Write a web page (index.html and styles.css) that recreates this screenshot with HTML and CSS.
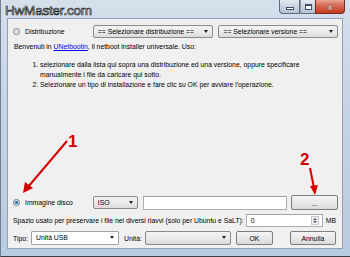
FILE: index.html
```html
<!DOCTYPE html>
<html lang="it">
<head>
    <meta charset="UTF-8">
    <title>UNetbootin</title>
    <link rel="stylesheet" href="styles.css">
</head>
<body>
    <div class="window">
        <div class="titlebar">
            <span class="watermark">HwMaster.com</span>
            <div class="caption-buttons">
                <span class="cap-btn cap-min"><i></i></span>
                <span class="cap-btn cap-max"><i></i></span>
                <span class="cap-btn cap-close">x</span>
            </div>
        </div>

        <div class="client">
            <div class="row row-distro">
                <span class="radio"></span>
                <span class="label">Distribuzione</span>
                <span class="select sel-distro">== Selezionare distribuzione ==</span>
                <span class="select sel-version">== Selezionare versione ==</span>
            </div>

            <p class="welcome">Benvenuti in <a href="#">UNetbootin</a>, il netboot installer universale. Uso:</p>

            <ol class="steps">
                <li>selezionare dalla lista qui sopra una distribuzione ed una versione, oppure specificare<br>manualmente i file da caricare qui sotto.</li>
                <li>Selezionare un tipo di installazione e fare clic su OK per avviare l'operazione.</li>
            </ol>

            <div class="bottom">
                <div class="row row-image">
                    <span class="radio checked"></span>
                    <span class="label">Immagine disco</span>
                    <span class="select sel-iso">ISO</span>
                    <span class="textbox path"></span>
                    <span class="button browse">...</span>
                </div>

                <div class="row row-space">
                    <span class="label">Spazio usato per preservare i file nei diversi riavvi (solo per Ubuntu e SaLT):</span>
                    <span class="textbox spin">0<span class="spin-arrows"><i class="up"></i><i class="down"></i></span></span>
                    <span class="label">MB</span>
                </div>

                <div class="row row-type">
                    <span class="label">Tipo:</span>
                    <span class="select sel-type white">Unità USB</span>
                    <span class="label">Unità:</span>
                    <span class="select sel-drive"></span>
                    <span class="button ok">OK</span>
                    <span class="button cancel">Annulla</span>
                </div>
            </div>

            <!-- annotation arrows drawn over the dialog -->
            <svg class="notes" width="350" height="257" viewBox="0 0 350 257">
                <line x1="66" y1="141" x2="27" y2="187" stroke="#d20000" stroke-width="2"/>
                <polygon points="22,193 24,182 32,188" fill="#d20000"/>
                <text x="67" y="147" class="note-num">1</text>
                <line x1="309" y1="168" x2="313" y2="188" stroke="#d20000" stroke-width="2"/>
                <polygon points="314,195 309,186 317,185" fill="#d20000"/>
                <text x="299" y="165" class="note-num">2</text>
            </svg>
        </div>
    </div>
</body>
</html>
```

FILE: styles.css
```css
*{
    box-sizing: border-box;
}

body{
    margin: 0;
    width: 350px;
    height: 257px;
    overflow: hidden;
    font-family: "Liberation Sans", Arial, sans-serif;
    font-size: 6.85px;
    color: #000;
}

.window {
    position: relative;
    width: 350px;
    height: 257px;
    display: flex;
    flex-direction: column;
    padding: 0 7px 7px 6px;
    background: linear-gradient(to bottom, #d6e0ec 0%, #c6d4e5 40%, #b9cbe0 100%);
    border-left: 1px solid #6f7f92;
    border-bottom: 1px solid #3a3f46;
}

.titlebar {
    height: 18px;
    flex: none;
    display: flex;
    justify-content: flex-end;
    align-items: flex-start;
}

.watermark {
    position: absolute;
    left: 4px;
    top: 4px;
    font-size: 13.5px;
    line-height: 14px;
    letter-spacing: -0.2px;
    color: #fff;
    -webkit-text-stroke: 0.7px #222;
}

.caption-buttons {
    display: flex;
    margin-right: -2px;
}
.cap-btn {
    height: 14px;
    display: flex;
    align-items: center;
    justify-content: center;
    border: 1px solid #5d6b80;
    border-top: none;
    background: linear-gradient(to bottom, #e4e9f0, #c9d2de 50%, #b8c4d4);
}
.cap-min {
    width: 21px;
    border-radius: 0 0 0 4px;
}
.cap-min i {
    width: 8px;
    height: 3px;
    margin-top: 4px;
    background: #fff;
    border: 1px solid #42506a;
}
.cap-max {
    width: 15px;
    border-left: 1px solid #8a98ab;
    border-right: none;
}
.cap-max i {
    width: 7px;
    height: 6px;
    border: 1px solid #42506a;
    border-top-width: 2px;
    background: #fff;
}
.cap-close {
    width: 30px;
    border-radius: 0 0 4px 0;
    border-color: #7a2a1e;
    background: linear-gradient(to bottom, #e8a493, #d5674f 45%, #c43b1e);
    color: #fff;
    font-weight: bold;
    font-size: 9px;
    -webkit-text-stroke: 0.3px #5a1a10;
}

.client {
    flex: 1;
    display: flex;
    flex-direction: column;
    background: #f0f0f0;
    border: 1px solid #8ea2ba;
    padding: 6px 4px 3px 5px;
}

.row {
    display: flex;
    align-items: center;
    white-space: nowrap;
}

.radio {
    width: 7px;
    height: 7px;
    border-radius: 50%;
    border: 1px solid #9aa0a8;
    background: radial-gradient(circle, #e6e6e6, #cfd3d8);
    margin-right: 5px;
}
.radio.checked {
    border-color: #8b9096;
    background: radial-gradient(circle, #2d8fd6 0, #1a5f9c 35%, #d8dde2 45%);
}

.row-distro .label, .row-image .label {
    width: 68px;
}

.select {
    position: relative;
    height: 13px;
    line-height: 11px;
    padding-left: 4px;
    border: 1px solid #8a8a8a;
    border-radius: 2px;
    background: linear-gradient(to bottom, #f3f3f3, #ebebeb 50%, #dcdcdc);
}
.select::after {
    content: "";
    position: absolute;
    right: 4px;
    top: 4px;
    border-left: 2.5px solid transparent;
    border-right: 2.5px solid transparent;
    border-top: 3px solid #222;
}
.select.white {
    background: #fff;
    border-color: #9da3ab;
    border-radius: 1px;
}

.sel-distro {
    width: 121px;
}
.sel-version {
    width: 120px;
    margin-left: 5px;
}

.welcome {
    margin: 4px 0 0 1px;
    line-height: 10px;
}
.welcome a {
    color: #0000ee;
}

.steps {
    margin: 8px 0 0 0;
    padding-left: 27px;
    line-height: 10px;
}

.bottom {
    margin-top: auto;
}

.sel-iso {
    width: 45px;
}

.textbox {
    position: relative;
    height: 13px;
    line-height: 11px;
    padding-left: 4px;
    background: #fff;
    border: 1px solid #abadb3;
    border-top-color: #9ea3aa;
}
.path {
    width: 145px;
    height: 14px;
    margin-left: 5px;
}

.button {
    height: 14px;
    display: flex;
    align-items: center;
    justify-content: center;
    border: 1px solid #7d7d7d;
    border-radius: 2px;
    background: linear-gradient(to bottom, #f4f4f4, #e9e9e9 50%, #d9d9d9);
}
.browse {
    width: 47px;
    height: 15px;
    margin-left: 4px;
    padding-top: 2px;
}

.row-space {
    margin-top: 4px;
}
.spin {
    width: 77px;
    margin-left: 2px;
    margin-right: 3px;
}
.spin-arrows {
    position: absolute;
    right: 3px;
    top: 1px;
    width: 8px;
    height: 9px;
    display: flex;
    flex-direction: column;
    justify-content: space-between;
    align-items: center;
    border: 1px solid #c5c9ce;
    background: #eef0f2;
}
.spin-arrows i {
    width: 0;
    height: 0;
    border-left: 2px solid transparent;
    border-right: 2px solid transparent;
}
.spin-arrows .up {
    border-bottom: 2px solid #555;
    margin-top: 1px;
}
.spin-arrows .down {
    border-top: 2px solid #555;
    margin-bottom: 1px;
}

.row-type {
    margin-top: 4px;
}
.sel-type {
    width: 88px;
    height: 14px;
    margin-left: 3px;
    margin-right: 5px;
}
.sel-drive {
    width: 86px;
    height: 14px;
    margin-left: 3px;
}
.ok {
    width: 37px;
    margin-left: 5px;
}
.cancel {
    width: 46px;
    margin-left: 17px;
}

.notes {
    position: absolute;
    left: 0;
    top: 0;
    pointer-events: none;
}
.note-num {
    font-family: "Liberation Sans", Arial, sans-serif;
    font-weight: bold;
    font-size: 17px;
    fill: #d20000;
}
```
